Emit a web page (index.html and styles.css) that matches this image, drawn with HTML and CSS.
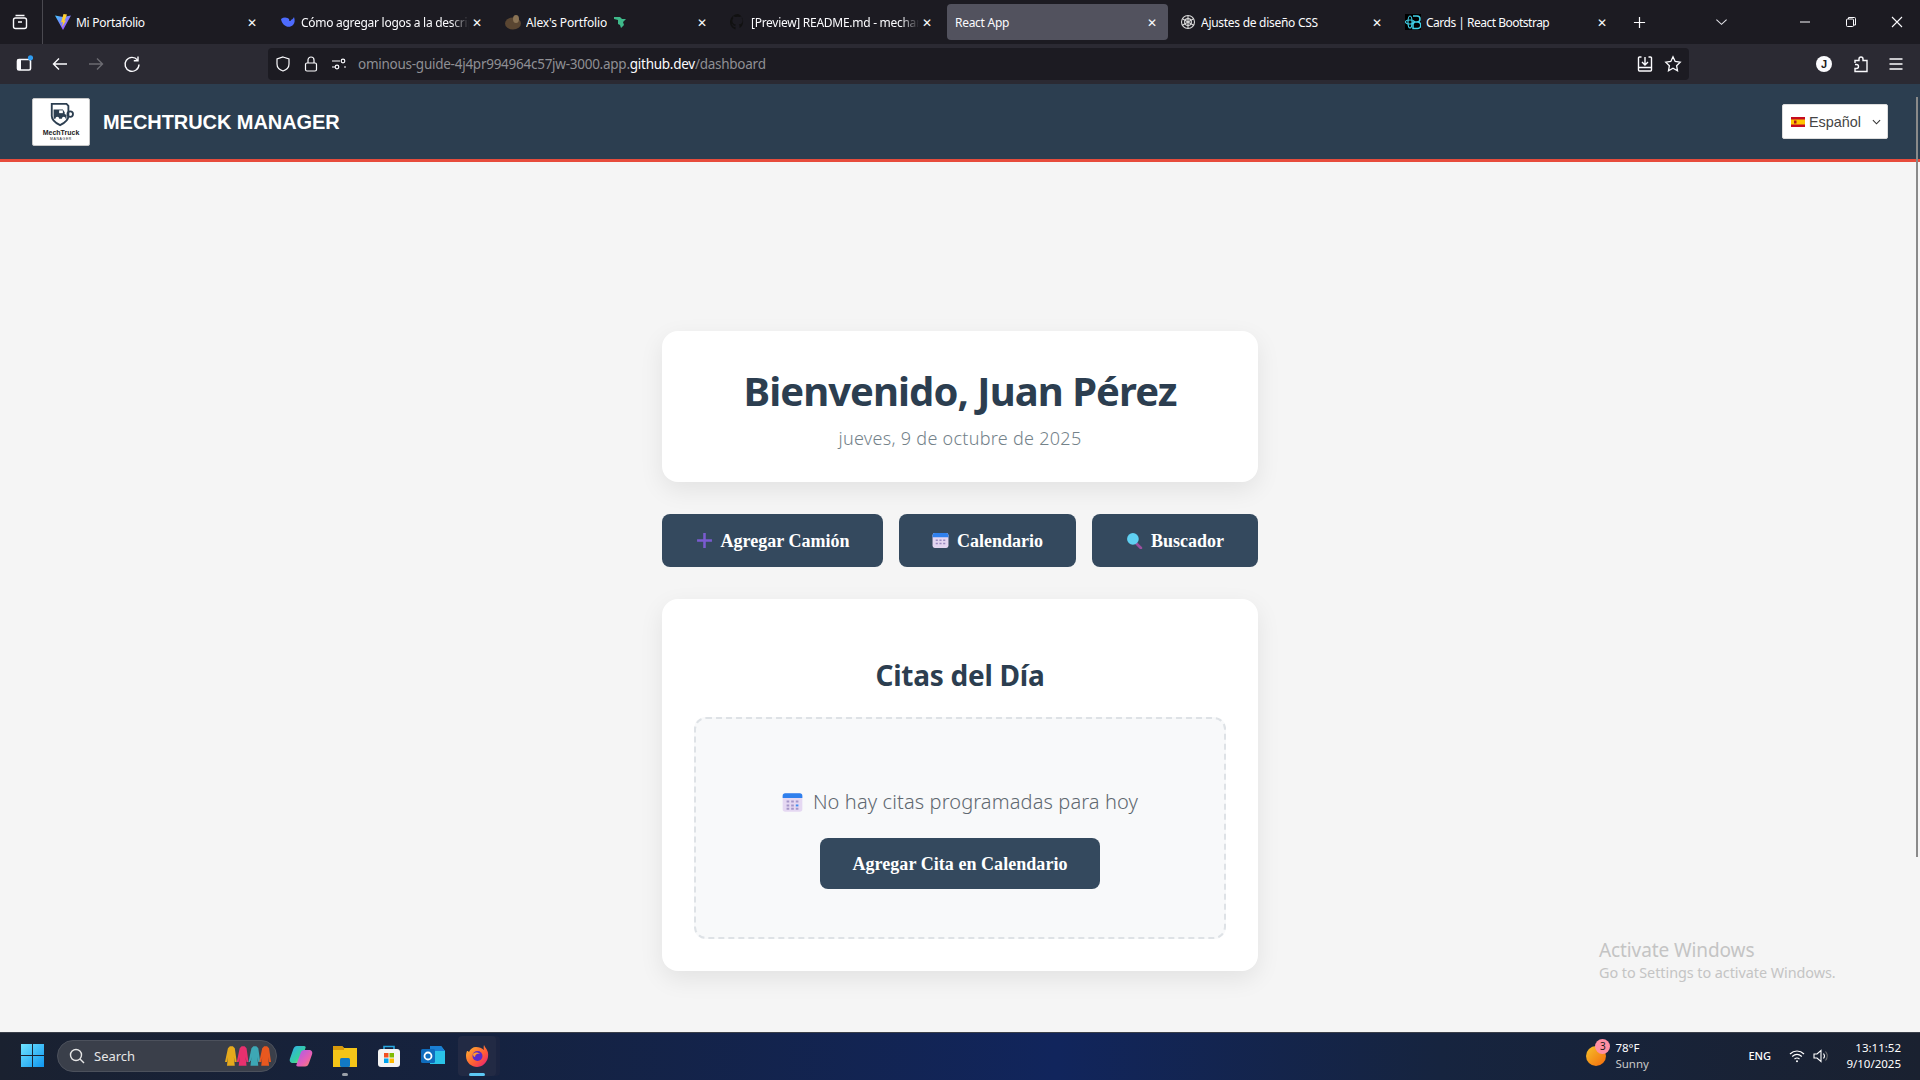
FILE: index.html
```html
<!DOCTYPE html>
<html lang="es">
<head>
<meta charset="utf-8">
<title>React App</title>
<link rel="stylesheet" href="styles.css">
</head>
<body>
<div class="screen">
  <div class="tabbar">
    <div class="tab-side">
      <svg class="ico18" viewBox="0 0 18 18" fill="none" stroke="#fbfbfe" stroke-width="1.4"><rect x="2.5" y="5" width="13" height="10.5" rx="2"/><path d="M4.5 2.500h9M7 9h4"/></svg>
    </div>
    <div class="tabs">
      <div class="tab"><svg class="fav" viewBox="0 0 16 16"><defs><linearGradient id="v" x1="0" y1="0" x2="1" y2="1"><stop offset="0" stop-color="#41c7ff"/><stop offset="1" stop-color="#bd34fe"/></linearGradient></defs><path d="M0 1.500l8 1.500 8-1.500L8 16z" fill="url(#v)"/><path d="M8.500 0L12 .5 9.500 7l1.500-.5L7 13 8 8 6 8.500z" fill="#ffcf2e"/></svg><span class="tab-title">Mi Portafolio</span><span class="x">✕</span></div>
      <div class="tab"><svg class="fav" viewBox="0 0 16 16"><path d="M1 5c1 7 8 10 12 6 2-2 2-5 1-8-1 2-2 3-4 3C7 3 4 3 1 5z" fill="#4d6bfe"/><circle cx="10" cy="6" r="1" fill="#1c1b22"/></svg><span class="tab-title fade">Cómo agregar logos a la descripción</span><span class="x">✕</span></div>
      <div class="tab"><svg class="fav" viewBox="0 0 16 16"><ellipse cx="8" cy="9.500" rx="8" ry="6" fill="#5a4632"/><ellipse cx="11" cy="5" rx="3" ry="4" fill="#8a7355"/></svg><span class="tab-title tab-auto">Alex's Portfolio</span><svg class="dino" viewBox="0 0 14 14"><path d="M1 2h6l2 2h4l-3 3 1 3-3 3-1-3-2-1V5L1 4z" fill="#3fb98a"/></svg><span class="tab-gap"></span><span class="x">✕</span></div>
      <div class="tab"><svg class="fav" viewBox="0 0 16 16"><path d="M8 0a8 8 0 0 0-2.500 15.600v-2.800c-2.200.5-2.700-1-2.700-1-.4-.9-.9-1.200-.9-1.200-.7-.5.100-.5.100-.5.800.1 1.200.8 1.200.8.700 1.200 1.900.9 2.300.7.100-.5.300-.9.500-1.100-1.800-.2-3.600-.9-3.600-4 0-.9.300-1.600.8-2.100-.1-.2-.4-1 .1-2.100 0 0 .7-.2 2.200.8a7.500 7.500 0 0 1 4 0c1.500-1 2.200-.8 2.200-.8.400 1.100.2 1.900.1 2.100.5.600.8 1.300.8 2.100 0 3.100-1.900 3.700-3.700 3.900.3.300.6.800.6 1.500v2.200A8 8 0 0 0 8 0z" fill="#111"/></svg><span class="tab-title fade">[Preview] README.md - mechanic</span><span class="x">✕</span></div>
      <div class="tab active"><span class="tab-title">React App</span><span class="x">✕</span></div>
      <div class="tab"><svg class="fav" viewBox="0 0 16 16" fill="none" stroke="#d8d8d8" stroke-width="1.100"><circle cx="8" cy="8" r="6.500"/><path d="M8 1.500v13M2.400 4.700l11.200 6.600M13.600 4.700L2.400 11.300"/><circle cx="8" cy="8" r="3.400"/></svg><span class="tab-title">Ajustes de diseño CSS</span><span class="x">✕</span></div>
      <div class="tab"><svg class="fav fav-dark" viewBox="0 0 16 16" fill="none" stroke="#41d1e8" stroke-width="1.100"><ellipse cx="5" cy="8" rx="4.500" ry="2"/><ellipse cx="5" cy="8" rx="2" ry="6"/><path d="M8 2h4a2.800 2.800 0 0 1 0 6H8m0 0h4.500a3 3 0 0 1 0 6.500H8z" stroke-width="1.500"/></svg><span class="tab-title tight">Cards | React Bootstrap</span><span class="x">✕</span></div>
      <svg class="plus" viewBox="0 0 14 14" fill="none" stroke="#fbfbfe" stroke-width="1.300"><path d="M7 1v12M1 7h12"/></svg>
    </div>
    <div class="win-controls">
      <svg class="chev" viewBox="0 0 14 8" fill="none" stroke="#e0e0e6" stroke-width="1.200"><path d="M1.500 1.500L7 6.500l5.500-5"/></svg>
      <div class="win-btns">
        <svg class="ico12" viewBox="0 0 12 12" fill="none" stroke="#fbfbfe"><path d="M1 6h10"/></svg>
        <svg class="ico12" viewBox="0 0 12 12" fill="none" stroke="#fbfbfe"><rect x="1.500" y="3" width="7" height="7.500" rx="1"/><path d="M3.500 3V1.500h6a1 1 0 0 1 1 1V9H8.500"/></svg>
        <svg class="ico12" viewBox="0 0 12 12" fill="none" stroke="#fbfbfe" stroke-width="1.100"><path d="M1 1l10 10M11 1L1 11"/></svg>
      </div>
    </div>
  </div>

  <div class="toolbar">
    <div class="nav">
      <svg class="ico18 sidebar" viewBox="0 0 18 18"><rect x="2.500" y="4.500" width="13" height="10.500" rx="1.500" fill="none" stroke="#fbfbfe" stroke-width="1.600"/><rect x="2.500" y="4.500" width="3.500" height="10.500" fill="#fbfbfe"/><circle cx="15.500" cy="2.800" r="2.600" fill="#2f9cf0"/></svg>
      <svg class="ico18" viewBox="0 0 18 18" fill="none" stroke="#fbfbfe" stroke-width="1.400"><path d="M16 9H2.500M8 3.500L2.500 9 8 14.500"/></svg>
      <svg class="ico18" viewBox="0 0 18 18" fill="none" stroke="#6c6b72" stroke-width="1.400"><path d="M2 9h13.500M10 3.500L15.500 9 10 14.500"/></svg>
      <svg class="ico18" viewBox="0 0 18 18" fill="none" stroke="#fbfbfe" stroke-width="1.400"><path d="M14.500 5A7 7 0 1 0 16 9.500"/><path d="M15 1.500v4.200h-4.200"/></svg>
    </div>
    <div class="urlbar">
      <svg class="ico16" viewBox="0 0 16 16" fill="none" stroke="#fbfbfe" stroke-width="1.200"><path d="M8 1l6 2v5c0 3.500-3 6-6 7-3-1-6-3.500-6-7V3z"/></svg>
      <svg class="ico16" viewBox="0 0 16 16" fill="none" stroke="#fbfbfe" stroke-width="1.200"><rect x="2.500" y="7" width="11" height="8" rx="1.500"/><path d="M5 7V4a3 3 0 0 1 6 0v3"/></svg>
      <svg class="ico16" viewBox="0 0 16 16" fill="none" stroke="#fbfbfe" stroke-width="1.200"><path d="M1 5h8M1 11h3M13 11h2"/><circle cx="12" cy="5" r="1.800"/><circle cx="6" cy="11" r="1.800"/></svg>
      <span class="url">ominous-guide-4j4pr994964c57jw-3000.app.<b>github.dev</b>/dashboard</span>
      <div class="url-right">
        <svg class="ico18" viewBox="0 0 18 18" fill="none" stroke="#fbfbfe" stroke-width="1.400"><path d="M5.500 2H3.500a1 1 0 0 0-1 1v12a1 1 0 0 0 1 1h11a1 1 0 0 0 1-1V3a1 1 0 0 0-1-1h-2M2.500 12.500h13"/><path d="M9 2v7M6 7l3 3 3-3"/></svg>
        <svg class="ico18" viewBox="0 0 18 18" fill="none" stroke="#fbfbfe" stroke-width="1.300"><path d="M9 1.800l2.200 4.700 5 .7-3.600 3.500.9 5-4.500-2.400-4.500 2.400.9-5L1.800 7.200l5-.7z"/></svg>
      </div>
    </div>
    <div class="tools">
      <span class="avatar">J</span>
      <svg class="ico18" viewBox="0 0 18 18" fill="none" stroke="#fbfbfe" stroke-width="1.400"><path d="M3 8V5.500h4V4a2 2 0 0 1 4 0v1.500h4v11H3V13.500h1.500a2 2 0 0 0 0-4H3"/></svg>
      <svg class="ico18 menu-ico" viewBox="0 0 18 18" fill="none" stroke="#fbfbfe" stroke-width="1.300"><path d="M2.500 4h13M2.500 9h13M2.500 14h13"/></svg>
    </div>
  </div>

  <div class="app">
    <header class="navbar">
      <div class="brand">
        <div class="logo">
          <svg class="logo-mark" viewBox="0 0 28 26"><path d="M4 1h16l2 2v11c0 5-5 8-9 10-4-2-9-5-9-10V3z" fill="none" stroke="#2c3e50" stroke-width="2"/><path d="M7 7h9l2 3v2l2 1v4H6V7z" fill="#2c3e50"/><rect x="12" y="8" width="4" height="3" fill="#fff"/><circle cx="10" cy="17" r="2" fill="#fff"/><circle cx="17" cy="17" r="2" fill="#fff"/><circle cx="24" cy="12" r="3" fill="none" stroke="#2c3e50" stroke-width="2"/></svg>
          <span class="logo-name">MechTruck</span>
          <span class="logo-sub">MANAGER</span>
        </div>
        <span class="brand-name">MECHTRUCK MANAGER</span>
      </div>
      <div class="lang">
        <svg class="flag" viewBox="0 0 14 10"><rect width="14" height="10" fill="#c60b1e"/><rect y="2.500" width="14" height="5" fill="#ffc400"/><rect x="3" y="3.500" width="2.500" height="3" fill="#ad1519"/></svg>
        <span>Español</span>
        <svg class="lang-chev" viewBox="0 0 10 6" fill="none" stroke="#333" stroke-width="1.200"><path d="M1 1l4 4 4-4"/></svg>
      </div>
    </header>

    <main class="main">
      <div class="column">
        <section class="card welcome">
          <h1>Bienvenido, Juan Pérez</h1>
          <p>jueves, 9 de octubre de 2025</p>
        </section>
        <div class="actions">
          <button class="btn btn-a">
            <svg class="btn-ico" viewBox="0 0 16 16"><path d="M6.800 1h2.400v5.800H15v2.400H9.200V15H6.800V9.200H1V6.800h5.800z" fill="#7a5bd0"/></svg>Agregar Camión</button>
          <button class="btn btn-b">
            <svg class="btn-ico" viewBox="0 0 16 16"><rect x="0.500" y="1" width="15" height="14" rx="2" fill="#e3d5f0"/><path d="M.5 5V3a2 2 0 0 1 2-2h11a2 2 0 0 1 2 2v2z" fill="#2f80ed"/><path d="M3.500 7h2v1.500h-2zM7 7h2v1.500H7zM10.500 7h2v1.500h-2zM3.500 10h2v1.500h-2zM7 10h2v1.500H7zM10.500 10h2v1.500h-2z" fill="#9a8ac0"/></svg>Calendario</button>
          <button class="btn btn-c">
            <svg class="btn-ico" viewBox="0 0 16 16"><path d="M9 10l5 5" stroke="#9b4f9e" stroke-width="2.600" stroke-linecap="round"/><circle cx="6.500" cy="6.500" r="5.500" fill="#5fd0f2"/></svg>Buscador</button>
        </div>
        <section class="card citas">
          <h2>Citas del Día</h2>
          <div class="empty">
            <p><svg class="empty-ico" viewBox="0 0 16 16"><rect x="0.500" y="1" width="15" height="14" rx="2" fill="#e5d8f2"/><path d="M.5 4.500V3a2 2 0 0 1 2-2h11a2 2 0 0 1 2 2v1.500z" fill="#2f80ed"/><path d="M3.500 6.500h2V8h-2zM7 6.500h2V8H7zM10.500 6.500h2V8h-2zM3.500 9.500h2V11h-2zM7 9.500h2V11H7zM3.500 12h2v1.500h-2zM7 12h2v1.500H7zM10.500 12h2v1.500h-2z" fill="#a596c8"/><path d="M10.500 9.500h2V11h-2z" fill="#3f8cf0"/></svg>No hay citas programadas para hoy</p>
            <button class="btn btn-d">Agregar Cita en Calendario</button>
          </div>
        </section>
      </div>
      <div class="watermark">
        <div class="wm-title">Activate Windows</div>
        <div class="wm-sub">Go to Settings to activate Windows.</div>
      </div>
    </main>
    <div class="scrollbar"></div>
  </div>

  <footer class="taskbar">
    <div class="task-left">
      <svg class="start" viewBox="0 0 24 24"><defs><linearGradient id="w" x1="0" y1="0" x2="1" y2="1"><stop offset="0" stop-color="#6fe3ff"/><stop offset="1" stop-color="#0f96ef"/></linearGradient></defs><path d="M0 0h11.500v11.500H0zM12.500 0H24v11.500H12.500zM0 12.500h11.500V24H0zM12.500 12.500H24V24H12.500z" fill="url(#w)"/></svg>
      <div class="search">
        <svg class="ico16" viewBox="0 0 16 16" fill="none" stroke="#e6e6e6" stroke-width="1.400"><circle cx="7" cy="7" r="5.500"/><path d="M11 11l4 4"/></svg>
        <span>Search</span>
        <svg class="coats" viewBox="0 0 48 22">
          <path d="M3 3l2-2h3l2 2 2 14h-2l-1-5 1 9H2l1-9-1 5H0z" fill="#e5a91c"/>
          <path d="M15 3l2-2h3l2 2 2 14h-2l-1-5 1 9h-8l1-9-1 5h-2z" fill="#e8306e"/>
          <path d="M27 3l2-2h3l2 2 2 14h-2l-1-5 1 9h-8l1-9-1 5h-2z" fill="#3da7b5"/>
          <path d="M38 3l2-2h3l2 2 2 14h-2l-1-5 1 9h-8l1-9-1 5h-2z" fill="#e8581f"/>
        </svg>
      </div>
      <div class="app-slot">
        <svg class="app-ico" viewBox="0 0 24 24"><defs><linearGradient id="c1" x1="0" y1="0" x2="1" y2="1"><stop offset="0" stop-color="#2fa8f0"/><stop offset=".6" stop-color="#35d0a0"/><stop offset="1" stop-color="#f5d33c"/></linearGradient><linearGradient id="c2" x1="0" y1="0" x2="1" y2="1"><stop offset="0" stop-color="#a35cf0"/><stop offset=".6" stop-color="#e85fb4"/><stop offset="1" stop-color="#f58a5c"/></linearGradient></defs><path d="M8 2h7c1.500 0 2 1 1.500 2L12 17c-.6 1.500-1.500 2-3 2H4c-2.500 0-4-2-3-4.500L4 6c.8-2.500 2-4 4-4z" fill="url(#c1)"/><path d="M16 6h4c2.500 0 4 2 3 4.500L20 19c-.8 2.500-2 3.500-4 3.500H9c-1.500 0-2-1-1.500-2L12 8c.6-1.500 2.500-2 4-2z" fill="url(#c2)"/></svg>
      </div>
      <div class="app-slot dot-gray">
        <svg class="app-ico" viewBox="0 0 24 24"><path d="M0 2h9l2 2h13v19H0z" fill="#f5c518"/><path d="M0 2h9l2 2v2H0z" fill="#d99a0b"/><rect x="7" y="14" width="10" height="9" rx="1.500" fill="#1279c4"/></svg>
      </div>
      <div class="app-slot">
        <svg class="app-ico" viewBox="0 0 24 24"><rect x="1" y="5" width="22" height="18" rx="3" fill="#f4f4f4"/><path d="M7 5V2.500h10V5" fill="none" stroke="#2aa8e0" stroke-width="1.600"/><path d="M7 9h4.500v4.500H7z" fill="#f25022"/><path d="M12.500 9H17v4.500h-4.500z" fill="#7fba00"/><path d="M7 14.500h4.500V19H7z" fill="#00a4ef"/><path d="M12.500 14.500H17V19h-4.500z" fill="#ffb900"/></svg>
      </div>
      <div class="app-slot">
        <svg class="app-ico" viewBox="0 0 24 24"><path d="M9 2h11l4 5v13H9z" fill="#2ac3e8"/><path d="M9 2h11l4 5H9z" fill="#1a7fd4"/><rect x="0" y="5" width="14" height="14" rx="1.500" fill="#0f6cbd"/><circle cx="7" cy="12" r="3.500" fill="none" stroke="#fff" stroke-width="1.800"/></svg>
      </div>
      <div class="app-slot active-app">
        <svg class="app-ico" viewBox="0 0 24 24"><defs><linearGradient id="f" x1="0" y1="0" x2="1" y2="1"><stop offset="0" stop-color="#ffbd2e"/><stop offset=".6" stop-color="#ff5a36"/><stop offset="1" stop-color="#e31587"/></linearGradient></defs><path d="M19 1c1 3 5 5 4 12-1 6-6 10-11 10S1 19 1 12c0-2 .5-4 1-5 1 0 1.500.5 2 1 1-3 4-5 7-5 3 0 6 1 8 3-.5-2-.5-3 0-5z" fill="url(#f)"/><circle cx="12.500" cy="12" r="5" fill="#592acb"/><path d="M8 10c2-2 5-2 7 0-2-1-5 0-5 3-1 0-2-1-2-3z" fill="#ff9a2e"/></svg>
      </div>
    </div>
    <div class="task-right">
      <div class="weather">
        <div class="sun"><span class="badge">3</span></div>
        <div class="weather-text"><span>78°F</span><span class="dim">Sunny</span></div>
      </div>
      <span class="eng">ENG</span>
      <div class="tray">
        <svg class="ico16" viewBox="0 0 16 16" fill="none" stroke="#fff" stroke-width="1.200"><path d="M1 6c4-4 10-4 14 0M3.200 8.500c3-2.600 6.600-2.600 9.600 0M5.500 11c1.500-1.200 3.500-1.200 5 0"/><circle cx="8" cy="13.300" r="1" fill="#fff" stroke="none"/></svg>
        <svg class="ico16" viewBox="0 0 16 16" fill="none" stroke="#fff" stroke-width="1.100"><path d="M1 6v4h3l4 3.500v-11L4 6z"/><path d="M10.500 5.500a4 4 0 0 1 0 5"/><path d="M12.500 3.500a7 7 0 0 1 0 9" stroke="#777"/></svg>
      </div>
      <div class="clock"><span>13:11:52</span><span>9/10/2025</span></div>
    </div>
  </footer>
</div>
</body>
</html>
```
FILE: styles.css
```css
* { box-sizing: border-box; }
html, body { margin: 0; padding: 0; height: 100%; overflow: hidden; }
body { font-family: "Open Sans", "Noto Sans", sans-serif; background: #f5f5f5; }
.screen { width: 1920px; height: 1080px; display: flex; flex-direction: column; overflow: hidden; }
svg { display: block; flex: none; }
.ico18 { width: 18px; height: 18px; }
.ico16 { width: 16px; height: 16px; }
.ico12 { width: 12px; height: 12px; }

/* Tab strip */
.tabbar { height: 44px; background: #1c1b22; display: flex; align-items: center; flex: none; }
.tab-side { width: 43px; height: 44px; display: flex; align-items: center; justify-content: center; border-right: 1px solid #4a4950; padding-right: 3px; }
.tabs { display: flex; align-items: center; gap: 4px; height: 44px; padding-left: 4px; }
.tab { width: 221px; height: 36px; display: flex; align-items: center; padding: 0 8px; font-family: "Noto Sans", sans-serif; font-size: 12px; color: #fbfbfe; border-radius: 4px; letter-spacing: -.28px; }
.tab.active { background: #52525e; }
.fav { width: 16px; height: 16px; margin-right: 5px; }
.fav-dark { background: #000; }
.dino { width: 14px; height: 14px; margin-left: 6px; }
.tab-title { flex: 1; min-width: 0; overflow: hidden; white-space: nowrap; }
.tab-title.tab-auto { flex: none; letter-spacing: -.15px; }
.tab-title.tight { letter-spacing: -.5px; }
.tab-title.fade { -webkit-mask-image: linear-gradient(90deg, #000 calc(100% - 18px), transparent); mask-image: linear-gradient(90deg, #000 calc(100% - 18px), transparent); }
.tab-gap { flex: 1; }
.x { font-size: 12px; width: 16px; flex: none; text-align: center; }
.plus { width: 13px; height: 13px; margin-left: 11px; }
.win-controls { flex: 1; display: flex; align-items: center; }
.chev { width: 13px; height: 8px; margin-left: 69px; }
.win-btns { margin-left: auto; display: flex; gap: 34px; padding-right: 17px; }

/* Toolbar */
.toolbar { height: 40px; background: #2b2a33; display: flex; align-items: center; flex: none; }
.nav { width: 268px; display: flex; align-items: center; gap: 18px; padding-left: 15px; }
.urlbar { width: 1421px; height: 32px; background: #1c1b22; border-radius: 4px; display: flex; align-items: center; gap: 12px; padding: 0 7px 0 7px; }
.url { font-family: "Noto Sans", sans-serif; font-size: 13.500px; color: #8f8f94; letter-spacing: -.26px; white-space: nowrap; margin-left: -1px; }
.url b { font-weight: 400; color: #fbfbfe; }
.url-right { margin-left: auto; display: flex; gap: 10px; }
.tools { flex: 1; display: flex; align-items: center; justify-content: flex-end; gap: 20px; padding-right: 15px; }
.menu-ico { margin-left: -3px; }
.avatar { width: 16px; height: 16px; border-radius: 50%; background: #fbfbfe; color: #1c1b22; font: 700 11px/16px "Liberation Sans", sans-serif; text-align: center; }

/* App */
.app { flex: 1; display: flex; flex-direction: column; position: relative; min-height: 0; }
.navbar { height: 78px; flex: none; background: #2c3e50; border-bottom: 3px solid #e74c3c; display: flex; align-items: center; justify-content: space-between; padding: 0 32px; }
.brand { display: flex; align-items: center; gap: 13px; }
.logo { width: 58px; height: 48px; background: #fff; border: 1px solid #c8c8c8; border-radius: 2px; display: flex; flex-direction: column; align-items: center; justify-content: center; color: #222; }
.logo-mark { width: 26px; height: 24px; }
.logo-name { font: 700 7px/8px "Liberation Sans", sans-serif; margin-top: 2px; }
.logo-sub { font: 400 3.500px/4px "Liberation Sans", sans-serif; letter-spacing: .6px; }
.brand-name { font: 700 20px/1 "Liberation Sans", Arial, sans-serif; color: #fff; letter-spacing: -.06px; }
.lang { width: 106px; height: 35px; background: #fff; border: 1px solid #ddd; border-radius: 2px; display: flex; align-items: center; padding: 0 6px 0 8px; font: 400 14.400px "Liberation Sans", sans-serif; color: #444; }
.flag { width: 14px; height: 10px; margin-right: 4px; }
.lang-chev { width: 9px; height: 6px; margin-left: auto; }

.main { flex: 1; display: flex; flex-direction: column; align-items: center; padding-top: 169px; position: relative; min-height: 0; }
.column { width: 596px; display: flex; flex-direction: column; }
.card { background: #fff; border-radius: 16px; box-shadow: 0 8px 24px rgba(0,0,0,.08); text-align: center; }
.welcome { height: 151px; padding-top: 34px; }
h1 { margin: 0; font: 700 40px/52px "Noto Sans", sans-serif; color: #2c3e50; letter-spacing: -.95px; }
.welcome p { margin: 8px 0 0; font: 300 18px/26px "Noto Sans", sans-serif; color: #74828a; letter-spacing: .28px; }
.actions { display: flex; gap: 16px; margin: 32px 0; }
.btn { height: 53px; background: #34495e; color: #fff; border: 0; border-radius: 8px; font: 700 18px/1 "Liberation Serif", serif; display: flex; align-items: center; justify-content: center; padding: 0; }
.btn-a { width: 221px; }
.btn-b { width: 177px; }
.btn-c { width: 166px; }
.btn-ico { width: 17px; height: 17px; margin-right: 8px; }
.citas { height: 372px; padding: 0 32px; }
h2 { margin: 0; padding-top: 56px; font: 700 28px/40px "Noto Sans", sans-serif; color: #2c3e50; letter-spacing: -.25px; }
.empty { height: 222px; margin-top: 22px; background: #f8f9fa; border: 2px dashed #dee2e6; border-radius: 12px; display: flex; flex-direction: column; align-items: center; padding-top: 69px; }
.empty p { margin: 0; display: flex; align-items: center; font: 300 20px/28px "Noto Sans", sans-serif; color: #5f6870; letter-spacing: .12px; }
.empty-ico { width: 21px; height: 21px; margin-right: 10px; }
.btn-d { width: 280px; height: 51px; margin-top: 22px; letter-spacing: .05px; }

.watermark { position: absolute; left: 1599px; top: 777px; color: #c4c4c4; }
.wm-title { font: 400 19px/22px "Noto Sans", sans-serif; letter-spacing: -.1px; }
.wm-sub { font: 400 14.400px/24px "Noto Sans", sans-serif; letter-spacing: -.05px; }
.scrollbar { position: absolute; right: 2px; top: 13px; width: 2px; height: 760px; background: #8a8a8a; }

/* Taskbar */
.taskbar { height: 48px; flex: none; background: linear-gradient(90deg, #1a2130 0%, #15223f 25%, #11255c 55%, #16243f 75%, #1a2130 100%); border-top: 1px solid #3a3f4a; display: flex; align-items: center; justify-content: space-between; padding-bottom: 2px; font-family: "Noto Sans", sans-serif; color: #fff; }
.task-right { display: flex; align-items: center; padding-right: 19px; }
.task-left { display: flex; align-items: center; padding-left: 21px; }
.start { width: 23px; height: 23px; }
.search { width: 220px; height: 32px; margin-left: 13px; margin-right: 2px; background: #3a3f4a; border: 1px solid #4c515c; border-radius: 16px; display: flex; align-items: center; padding: 0 4px 0 11px; font-size: 13px; color: #e6e6e6; gap: 9px; }
.coats { width: 47px; height: 22px; margin-left: auto; }
.app-ico { width: 24px; height: 24px; }
.app-slot { width: 44px; height: 40px; display: flex; align-items: center; justify-content: center; position: relative; }
.dot-gray::after, .active-app::after { content: ""; position: absolute; bottom: 0; left: 50%; height: 3px; border-radius: 2px; transform: translateX(-50%); }
.dot-gray::after { width: 6px; background: #9aa0a8; }
.active-app { width: 38px; margin: 0 3px; border-radius: 4px; background: #222a44; box-shadow: 4px 0 0 #1b2440; }
.active-app::after { width: 16px; background: #5cc8f5; }
.weather { display: flex; align-items: center; gap: 9px; width: 162px; font-size: 11.500px; line-height: 16px; }
.sun { width: 20px; height: 20px; border-radius: 50%; background: linear-gradient(135deg, #f5c22a, #f46a0c); position: relative; }
.badge { position: absolute; left: 9px; top: -7px; width: 15px; height: 15px; border-radius: 50%; background: #ff8fa3; color: #1a1a1a; font-size: 10px; line-height: 15px; text-align: center; }
.weather-text { display: flex; flex-direction: column; }
.dim { color: #c8c8c8; }
.eng { font-size: 11px; font-weight: 500; width: 41px; }
.tray { display: flex; gap: 8px; width: 57px; }
.clock { display: flex; flex-direction: column; align-items: flex-end; font-size: 11.500px; line-height: 16px; }
```
